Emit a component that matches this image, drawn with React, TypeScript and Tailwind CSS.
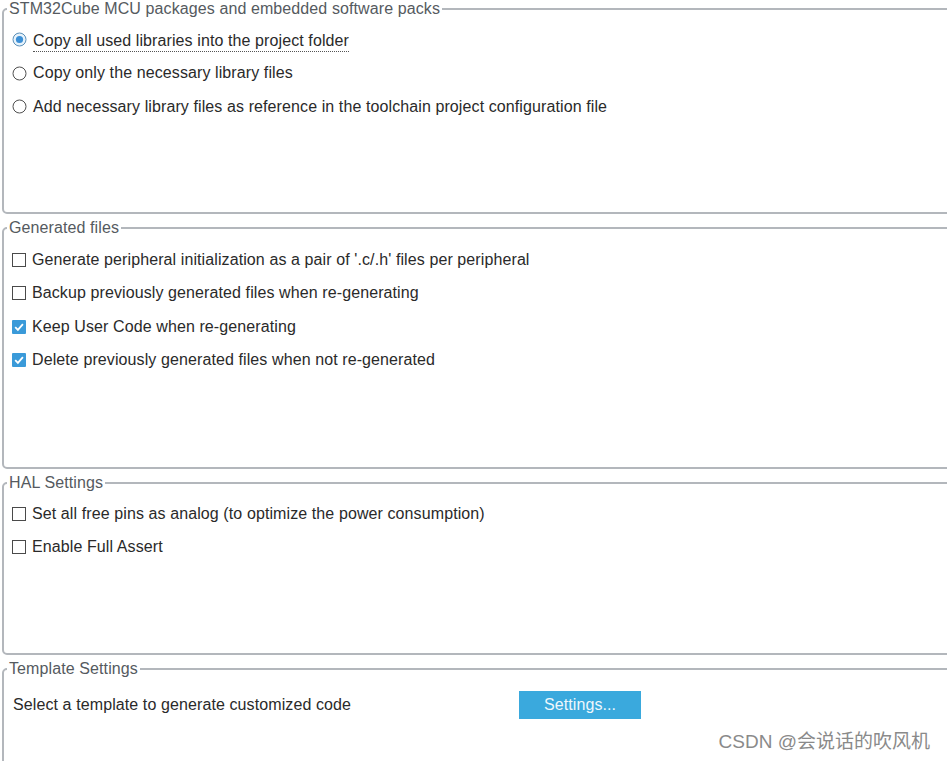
import React from "react";

const font = { fontFamily: '"Liberation Sans", Arial, "Noto Sans CJK SC", sans-serif' };

function Radio({ checked }: { checked?: boolean }) {
  return (
    <svg width="15" height="15" viewBox="0 0 15 15" className="shrink-0">
      {checked ? (
        <>
          <circle cx="7.5" cy="7.5" r="6.5" fill="#e6f2fb" stroke="#5a8fb8" strokeWidth="1" />
          <circle cx="7.5" cy="7.5" r="3.6" fill="#3b8fd6" />
        </>
      ) : (
        <circle cx="7.5" cy="7.5" r="6.5" fill="#fff" stroke="#505050" strokeWidth="1" />
      )}
    </svg>
  );
}

function Check({ checked }: { checked?: boolean }) {
  return checked ? (
    <svg width="14" height="14" viewBox="0 0 14 14" className="shrink-0">
      <rect x="0" y="0" width="14" height="14" rx="1" fill="#3a9ad9" />
      <path d="M3.2 7.2 L5.9 9.9 L10.9 4.2" fill="none" stroke="#fff" strokeWidth="1.8" />
    </svg>
  ) : (
    <svg width="14" height="14" viewBox="0 0 14 14" className="shrink-0">
      <rect x="0.5" y="0.5" width="13" height="13" fill="#fff" stroke="#4a4a4a" strokeWidth="1" />
    </svg>
  );
}

function Group({ title, h, pt, children }: { title: string; h: string; pt: string; children: React.ReactNode }) {
  return (
    <fieldset className={`shrink-0 w-[980px] ml-[2px] border-2 border-[#b3b7bc] rounded-[5px] ${h}`}>
      <legend className="ml-[3px] px-[2px] text-[16px] leading-[18px] tracking-[0.1px] text-[#555a60]">{title}</legend>
      <div className={`${pt} pl-[8px]`}>{children}</div>
    </fieldset>
  );
}

function Row({ icon, label, focus }: { icon: React.ReactNode; label: string; focus?: boolean }) {
  return (
    <div className="h-[33.5px] flex items-center gap-[6px] text-[16px] tracking-[0.1px] text-[#2a2a2a]">
      {icon}
      <span className={focus ? "border-b border-dotted border-[#555] leading-[20px] mt-[3px]" : "leading-[20px]"}>
        {label}
      </span>
    </div>
  );
}

export default function App() {
  return (
    <div className="relative w-[947px] h-[761px] overflow-hidden bg-white flex flex-col gap-[5px]" style={font}>
      <Group title="STM32Cube MCU packages and embedded software packs" h="h-[214px]" pt="pt-[5px]">
        <Row icon={<Radio checked />} label="Copy all used libraries into the project folder" focus />
        <Row icon={<Radio />} label="Copy only the necessary library files" />
        <Row icon={<Radio />} label="Add necessary library files as reference in the toolchain project configuration file" />
      </Group>

      <Group title="Generated files" h="h-[250px]" pt="pt-[6px]">
        <Row icon={<Check />} label="Generate peripheral initialization as a pair of '.c/.h' files per peripheral" />
        <Row icon={<Check />} label="Backup previously generated files when re-generating" />
        <Row icon={<Check checked />} label="Keep User Code when re-generating" />
        <Row icon={<Check checked />} label="Delete previously generated files when not re-generated" />
      </Group>

      <Group title="HAL Settings" h="h-[181px]" pt="pt-[5px]">
        <Row icon={<Check />} label="Set all free pins as analog (to optimize the power consumption)" />
        <Row icon={<Check />} label="Enable Full Assert" />
      </Group>

      <Group title="Template Settings" h="h-[200px]" pt="pt-0">
        <div className="pt-[13px] h-[28px] box-content flex items-center text-[16px] tracking-[0.1px] text-[#2a2a2a]">
          <span className="w-[507px] pl-[1px]">Select a template to generate customized code</span>
          <button className="w-[122px] h-[28px] bg-[#3aa9dd] text-[#eef7fc] text-[16px]">Settings...</button>
        </div>
      </Group>

      <div className="absolute right-[17px] bottom-[6px] text-[19px] leading-[26px] text-[#8a8a8a]">CSDN @会说话的吹风机</div>
    </div>
  );
}
